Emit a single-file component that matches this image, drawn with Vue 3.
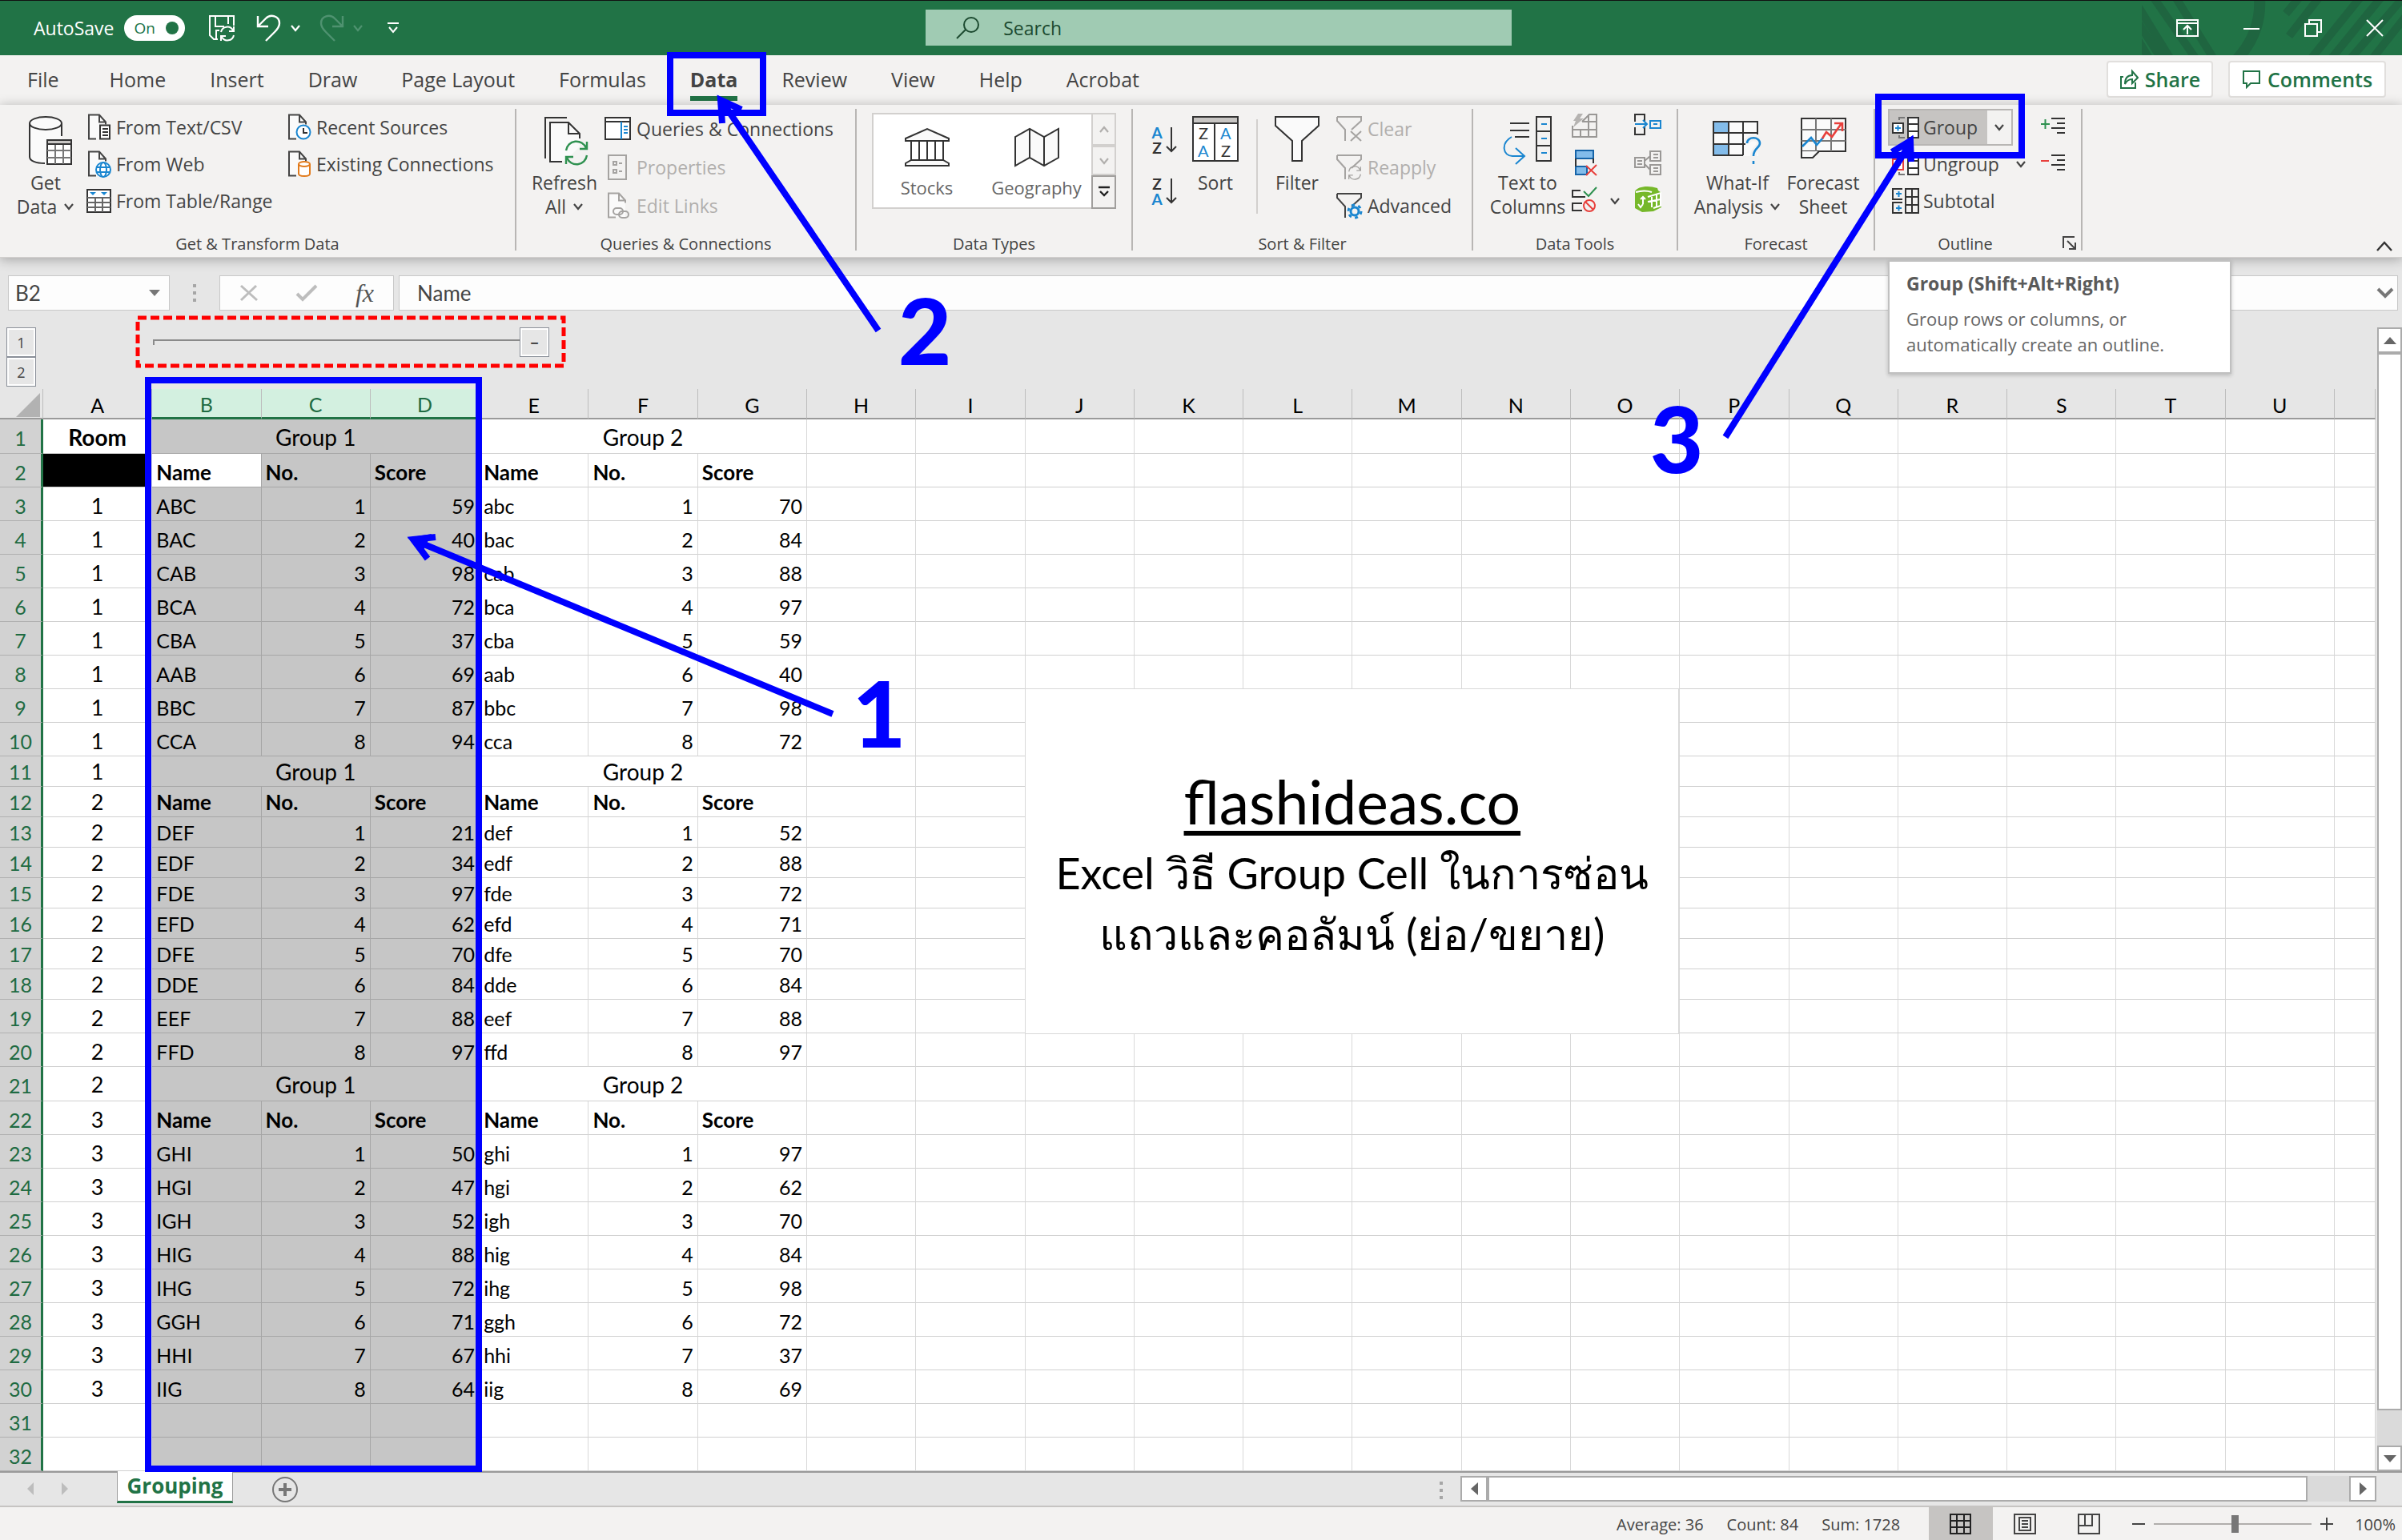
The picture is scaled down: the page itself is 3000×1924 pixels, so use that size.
<script setup>
import { ref } from 'vue'

const autoSave = ref(true)
const zoomLevel = ref(100)
const formula = ref('Name')

const tabs = ['File', 'Home', 'Insert', 'Draw', 'Page Layout', 'Formulas', 'Data', 'Review', 'View', 'Help', 'Acrobat']
const letters = 'ABCDEFGHIJKLMNOPQRSTU'.split('')
const selected = ['B', 'C', 'D']

const blocks = [
  {
    names: ['ABC', 'BAC', 'CAB', 'BCA', 'CBA', 'AAB', 'BBC', 'CCA'],
    left: [59, 40, 98, 72, 37, 69, 87, 94],
    right: [70, 84, 88, 97, 59, 40, 98, 72],
  },
  {
    names: ['DEF', 'EDF', 'FDE', 'EFD', 'DFE', 'DDE', 'EEF', 'FFD'],
    left: [21, 34, 97, 62, 70, 84, 88, 97],
    right: [52, 88, 72, 71, 70, 84, 88, 97],
  },
  {
    names: ['GHI', 'HGI', 'IGH', 'HIG', 'IHG', 'GGH', 'HHI', 'IIG'],
    left: [50, 47, 52, 88, 72, 71, 67, 64],
    right: [97, 62, 70, 84, 98, 72, 37, 69],
  },
]

const rows = []
blocks.forEach((block, b) => {
  rows.push({ kind: 'title', room: b === 0 ? 'Room' : b })
  rows.push({ kind: 'head', room: b === 0 ? '' : b + 1 })
  block.names.forEach((name, i) => {
    rows.push({
      kind: 'data',
      room: b + 1,
      cells: [name, i + 1, block.left[i], name.toLowerCase(), i + 1, block.right[i]],
    })
  })
})
rows.push({ kind: 'empty' }, { kind: 'empty' })
const headings = ['Name', 'No.', 'Score', 'Name', 'No.', 'Score']
const isShort = (n) => n >= 11 && n <= 18
</script>

<template>
  <div class="app">
    <svg class="defs" aria-hidden="true">
      <symbol id="chev" viewBox="0 0 14 10"><path d="M2 2l5 6 5-6" fill="none" stroke="currentColor" stroke-width="2.2" /></symbol>
      <symbol id="doc" viewBox="0 0 32 34"><path d="M3 1.500h13l8 9v21H3z" fill="#fafafa" /><path d="M12 31.500H3v-30h13l8 9v3M16 1.500v9h8" fill="none" stroke="currentColor" stroke-width="2" /></symbol>
      <symbol id="funnel" viewBox="0 0 34 34"><path d="M2 2h30v5L20 18M12 32V18L2 7V2" fill="none" stroke="currentColor" stroke-width="2" /></symbol>
      <symbol id="spin" viewBox="0 0 32 32"><path d="M3 13A13 13 0 0 1 28 10M29 2v9h-9M29 19A13 13 0 0 1 4 22M3 30v-9h9" fill="none" stroke="currentColor" stroke-width="2.400" /></symbol>
    </svg>

    <header class="titlebar">
      <svg class="pattern" viewBox="0 0 325 68" fill="none" stroke="#1f6540" stroke-width="10" aria-hidden="true">
        <path d="M-4 8L38 76M-4 28L28 78M-4 50L14 80M12-8L70 76M40-8L92 76" />
        <path d="M147-4Q150 40 118 74" stroke-width="14" />
        <path d="M180 16L200-8M184 44L226-10M210 74L276-8M232 78L302-8M254 80L330-8M282 80L334 14" />
      </svg>
      <label class="autosave">
        <span>AutoSave</span>
        <input v-model="autoSave" type="checkbox" role="switch" />
        <span class="pill">On<i></i></span>
      </label>
      <button class="qat save" aria-label="Save">
        <svg width="34" height="34" viewBox="0 0 34 34" fill="none" stroke="#fff" stroke-width="2"><path d="M12 31H7l-5-5V2h30v12M9 2v13h11M25 2v10M10 31V20h4" /><path d="M16 22a8 8 0 0 1 15-2M32 15v6h-6M32 26a8 8 0 0 1-15 2M16 33v-6h6" /></svg>
      </button>
      <button class="qat undo" aria-label="Undo">
        <svg width="32" height="34" viewBox="0 0 32 34" fill="none" stroke="#fff" stroke-width="2.400"><path d="M2 2v13h13M2 15L12 5C18-1 29 2 29 11c0 5-3 8-6 11L12 33" /></svg>
      </button>
      <svg class="chev" width="14" height="10"><use href="#chev" /></svg>
      <button class="qat redo" aria-label="Redo" disabled>
        <svg width="32" height="34" viewBox="0 0 32 34" fill="none" stroke="#4f9270" stroke-width="2.400"><path d="M30 2v13H17M30 15L20 5C14-1 3 2 3 11c0 5 3 8 6 11l11 11" /></svg>
      </button>
      <svg class="chev dim" width="14" height="10"><use href="#chev" /></svg>
      <svg class="more" width="16" height="14" viewBox="0 0 16 14" fill="none" stroke="#fff" stroke-width="2"><path d="M1 1h14M3 6l5 6 5-6" /></svg>
      <label class="search">
        <svg width="32" height="30" viewBox="0 0 32 30" fill="none" stroke="#1c4a30" stroke-width="2"><circle cx="20" cy="11" r="9" /><path d="M13 17L2 28" /></svg>
        <input type="text" placeholder="Search" aria-label="Search" />
      </label>
      <div class="winctl">
        <button aria-label="Ribbon display options"><svg width="28" height="22" viewBox="0 0 28 22" fill="none" stroke="#fff" stroke-width="2"><path d="M1 1h26v20H1zM1 5h26M14 19V9M9 13l5-5 5 5" /></svg></button>
        <button aria-label="Minimize"><svg width="22" height="22" viewBox="0 0 22 22" stroke="#fff" stroke-width="2"><path d="M1 12h20" /></svg></button>
        <button aria-label="Restore"><svg width="22" height="22" viewBox="0 0 22 22" fill="none" stroke="#fff" stroke-width="2"><path d="M1 6h15v15H1zM6 6V1h15v15h-5" /></svg></button>
        <button aria-label="Close"><svg width="22" height="22" viewBox="0 0 22 22" stroke="#fff" stroke-width="2"><path d="M1 1l20 20M21 1L1 21" /></svg></button>
      </div>
    </header>

    <nav class="tabs">
      <button v-for="t in tabs" :key="t" :class="{ active: t === 'Data' }">{{ t }}</button>
      <div class="side">
        <button class="share">
          <svg width="24" height="26" viewBox="0 0 24 26" fill="none" stroke="currentColor" stroke-width="2"><path d="M5 10H2v14h18v-7M7 19c0-8 4-11 9-11V3l7 8-7 7v-5c-4 0-7 2-9 6z" /></svg>Share
        </button>
        <button class="comments">
          <svg width="24" height="24" viewBox="0 0 24 24" fill="none" stroke="currentColor" stroke-width="2"><path d="M2 2h20v15H11l-5 5v-5H2z" /></svg>Comments
        </button>
      </div>
    </nav>

    <section class="ribbon">
      <div class="group g1">
        <div class="body">
          <button class="big">
            <svg width="60" height="62" viewBox="0 0 60 62" fill="none" stroke="#333" stroke-width="2"><path d="M4 9v43c0 4 8 8 20 8h2V30h19V9" fill="#fafafa" stroke="none" /><ellipse cx="25" cy="9" rx="20" ry="8" fill="#fafafa" /><path d="M5 9v42c0 5 8 8 19 8M45 9v16" /><path d="M27 30h30v30H27z" fill="#fff" /><path d="M27 30h30v5H27z" fill="#c8c6c4" /><path d="M27 43h30M27 52h30M37 36v24M47 36v24" stroke="#777" /></svg>
            <span>Get</span><span>Data <svg class="c" width="14" height="10"><use href="#chev" /></svg></span>
          </button>
          <div class="small first">
            <button><span class="ic"><svg width="32" height="34" viewBox="0 0 32 34"><use href="#doc" /><path d="M17 14.500h12v17H17zM20 19h7M20 23h7M20 27h7" fill="#fff" stroke="#333" stroke-width="2" /></svg></span>From Text/CSV</button>
            <button><span class="ic"><svg width="32" height="34" viewBox="0 0 32 34"><use href="#doc" /><g fill="#fff" stroke="#1a86d0" stroke-width="2"><circle cx="21" cy="24" r="9" /><ellipse cx="21" cy="24" rx="4" ry="9" /><path d="M13 21h16M13 27h16" /></g></svg></span>From Web</button>
            <button><span class="ic"><svg width="32" height="34" viewBox="0 0 32 34" fill="none" stroke="#333" stroke-width="2"><path d="M1 3h29v28H1z" fill="#fff" /><path d="M1 13h29M11 13v18M20 13v18M1 19h29M1 25h29" stroke="#666" /><path d="M4 6h8l-4 4zM18 6h8l-4 4z" fill="#1a86d0" stroke="none" /></svg></span>From Table/Range</button>
          </div>
          <div class="small">
            <button><span class="ic"><svg width="32" height="34" viewBox="0 0 32 34"><use href="#doc" /><circle cx="21" cy="23" r="8.500" fill="#fff" stroke="#1a86d0" stroke-width="2" /><path d="M21 18v6h5" fill="none" stroke="#333" stroke-width="2" /></svg></span>Recent Sources</button>
            <button><span class="ic"><svg width="32" height="34" viewBox="0 0 32 34"><use href="#doc" /><path d="M15 17v12c0 4 14 4 14 0V17" fill="#fff" stroke="#e27b1c" stroke-width="2" /><ellipse cx="22" cy="17" rx="7" ry="3" fill="#fff" stroke="#e27b1c" stroke-width="2" /></svg></span>Existing Connections</button>
          </div>
        </div>
        <div class="caption">Get &amp; Transform Data</div>
      </div>

      <div class="group g2">
        <div class="body">
          <button class="big">
            <svg width="60" height="62" viewBox="0 0 60 62" fill="none" stroke="#333" stroke-width="2"><path d="M3 53V2h27" /><path d="M9 8h24l13 14v16L28 56H9z" fill="#fafafa" stroke="none" /><path d="M24 57H9V8h23l14 14v6M32 8v14h14" /><svg x="26" y="30" width="32" height="32" color="#2f9150"><use href="#spin" /></svg></svg>
            <span>Refresh</span><span>All <svg class="c" width="14" height="10"><use href="#chev" /></svg></span>
          </button>
          <div class="small tall">
            <button><span class="ic"><svg width="34" height="30" viewBox="0 0 34 30" fill="none" stroke="#333" stroke-width="2"><path d="M1 1h31v27H1z" fill="#fff" /><path d="M1 6h31" /><path d="M21 6v22M24 12h5M24 16h5M24 20h5" stroke="#1a86d0" /></svg></span>Queries &amp; Connections</button>
            <button disabled><span class="ic"><svg width="34" height="34" viewBox="0 0 34 34" fill="none" stroke="#a5a3a1" stroke-width="2"><path d="M5 2h22v30H5zM11 10h4v4h-4zM11 20h4v4h-4zM18 12h4M18 22h4" /></svg></span>Properties</button>
            <button disabled><span class="ic"><svg width="34" height="34" viewBox="0 0 34 34"><svg x="2" width="32" height="34" color="#a5a3a1"><use href="#doc" /></svg><g fill="none" stroke="#a5a3a1" stroke-width="2"><rect x="11" y="20" width="12" height="8" rx="4" /><rect x="18" y="24" width="12" height="8" rx="4" /></g></svg></span>Edit Links</button>
          </div>
        </div>
        <div class="caption">Queries &amp; Connections</div>
      </div>

      <div class="group g3">
        <div class="body">
          <div class="gallery">
            <button class="item">
              <svg width="58" height="50" viewBox="0 0 58 50" fill="#fafafa" stroke="#333" stroke-width="2"><path d="M2 14L29 2l27 12v3H2zM9 17v24M19 17v24M29 17v24M39 17v24M49 17v24M2 48v-3l7-4h40l7 4v3z" /></svg>
              Stocks
            </button>
            <button class="item">
              <svg width="58" height="50" viewBox="0 0 58 50" fill="#fafafa" stroke="#333" stroke-width="2"><path d="M2 12L20 2l18 10L56 2v36L38 48 20 38 2 48zM20 2v36M38 12v36" /></svg>
              Geography
            </button>
            <div class="steps">
              <button aria-label="Previous types"><svg class="flip" width="14" height="10"><use href="#chev" /></svg></button>
              <button aria-label="Next types"><svg width="14" height="10"><use href="#chev" /></svg></button>
              <button class="open" aria-label="All types"><svg width="16" height="16" viewBox="0 0 16 16" fill="none" stroke="#222" stroke-width="2.400"><path d="M1 2h14M3 7l5 5 5-5" /></svg></button>
            </div>
          </div>
        </div>
        <div class="caption">Data Types</div>
      </div>

      <div class="group g4">
        <div class="body">
          <div class="orders">
            <button aria-label="Sort A to Z"><span class="az"><b class="blue">A</b><b>Z</b></span><svg width="14" height="34" viewBox="0 0 14 34"><path d="M7 1v30M1 25l6 6 6-6" fill="none" stroke="#333" stroke-width="2" /></svg></button>
            <button aria-label="Sort Z to A"><span class="az"><b>Z</b><b class="blue">A</b></span><svg width="14" height="34" viewBox="0 0 14 34"><path d="M7 1v30M1 25l6 6 6-6" fill="none" stroke="#333" stroke-width="2" /></svg></button>
          </div>
          <button class="big sort">
            <svg width="58" height="62" viewBox="0 0 58 62"><path d="M1 1h56v55H1z" fill="#fff" stroke="#333" stroke-width="2" /><path d="M1 1h56v8H1zM28 9v47" fill="#c8c6c4" stroke="#333" stroke-width="2" /><text x="8" y="29">Z</text><text x="7" y="51" fill="#1a86d0">A</text><text x="35" y="29" fill="#1a86d0">A</text><text x="36" y="51">Z</text></svg>
            <span>Sort</span>
          </button>
          <div class="rule"></div>
          <button class="big filter">
            <svg width="58" height="62" viewBox="0 0 58 62" fill="#fafafa" stroke="#333" stroke-width="2"><path d="M2 1h54v11L35 31v25H23V31L2 12z" /></svg>
            <span>Filter</span>
          </button>
          <div class="small tall">
            <button disabled><span class="ic"><svg width="34" height="34" viewBox="0 0 34 34" color="#a5a3a1"><use href="#funnel" /><path d="M19 20l13 12M32 20L19 32" stroke="#a5a3a1" stroke-width="2" /></svg></span>Clear</button>
            <button disabled><span class="ic"><svg width="34" height="34" viewBox="0 0 34 34" color="#a5a3a1"><use href="#funnel" /><svg x="15" y="15" width="18" height="18"><use href="#spin" /></svg></svg></span>Reapply</button>
            <button><span class="ic"><svg width="34" height="34" viewBox="0 0 34 34"><use href="#funnel" /><g fill="none" stroke="#1a86d0"><circle cx="24" cy="24" r="5" stroke-width="3" /><circle cx="24" cy="24" r="8" stroke-width="3" stroke-dasharray="4 4.380" /></g></svg></span>Advanced</button>
          </div>
        </div>
        <div class="caption">Sort &amp; Filter</div>
      </div>

      <div class="group g5">
        <div class="body">
          <button class="big">
            <svg width="62" height="62" viewBox="0 0 62 62" fill="none" stroke="#333" stroke-width="2"><path d="M9 9h24M9 18h24M15 26h18M42 1h18v55H42zM42 19h18M42 37h18" /><path d="M48 10h7M48 28h7M48 46h7M11 26C-3 34 0 50 12 50h14M16 40l11 10-11 10" stroke="#1a86d0" /></svg>
            <span>Text to</span><span>Columns</span>
          </button>
          <div class="tools">
            <button aria-label="Flash Fill" disabled><svg width="34" height="34" viewBox="0 0 34 34" fill="none" stroke="#9a9896" stroke-width="2"><path d="M14 12l9-9h9v28H2V17M2 22h30M12 22v9M22 3v28M14 12h18" /><path d="M9 2h6l-4 6h5L3 19l3-8H3z" fill="#b5b3b1" stroke="none" /></svg></button>
            <button aria-label="Remove Duplicates"><svg width="34" height="34" viewBox="0 0 34 34" fill="#83bcea" stroke="#1664a8" stroke-width="2"><path d="M6 2h22v10H6zM6 22h14v10H6z" /><path d="M6 12v10M28 12v6" stroke="#333" /><path d="M19 21l13 12M32 20L19 33" stroke="#e8403c" /></svg></button>
            <button aria-label="Data Validation"><svg width="34" height="34" viewBox="0 0 34 34" fill="none" stroke="#333" stroke-width="2"><path d="M12 6H2v8h16M14 22H2v9h12" /><path d="M16 7l6 6L32 2" stroke="#2f9150" /><circle cx="23" cy="25" r="7" stroke="#e8403c" /><path d="M18 20l10 10" stroke="#e8403c" /></svg></button>
          </div>
          <svg class="c toolchev" width="14" height="10"><use href="#chev" /></svg>
          <div class="tools">
            <button aria-label="Consolidate"><svg width="36" height="34" viewBox="0 0 36 34" fill="none" stroke="#333" stroke-width="2"><path d="M14 12V3H2v9M2 19v9h12v-9" /><path d="M2 15h14M12 10l5 5-5 5M21 11h13v9H21zM25 15h5" stroke="#1a86d0" /></svg></button>
            <button aria-label="Relationships" disabled><svg width="36" height="34" viewBox="0 0 36 34" fill="none" stroke="#9a9896" stroke-width="2"><path d="M2 11h12v12H2zM21 3h13v12H21zM21 20h13v12H21zM14 15l7-6M14 19l7 7M5 15h6M5 19h6M25 7h6M25 11h6M25 24h6M25 28h6" /></svg></button>
            <button aria-label="Data Model"><svg width="36" height="34" viewBox="0 0 36 34"><path d="M2 7c3-6 16-8 28-4l1 3 4 3v18l-10 5-14 1-9-5z" fill="#76b82a" /><path d="M3 8c7-2 14-2 20 0M23 14v13M29 11v15M18 14l16-5v16l-9 3M18 20l16-3M9 17l3-3 3 3M12 14v9M6 23l3 4 3-4" fill="none" stroke="#fff" stroke-width="2" /></svg></button>
          </div>
        </div>
        <div class="caption">Data Tools</div>
      </div>

      <div class="group g6">
        <div class="body">
          <button class="big whatif">
            <svg width="66" height="62" viewBox="0 0 66 62" fill="none" stroke="#333" stroke-width="2"><path d="M3 7h56v43H3z" fill="#fafafa" stroke="none" /><path d="M3 7h19v14H3zM3 35h19v14H3z" fill="#83bcea" stroke="none" /><path d="M40 49H3V7h55v16M3 21h55M3 35h40M22 7v42M40 7v42" /><path d="M45 34c0-9 16-9 16 0 0 6-8 6-8 16M53 55v6" stroke="#f3f2f1" stroke-width="8" /><path d="M45 34c0-9 16-9 16 0 0 6-8 6-8 16M53 56v4" stroke="#1a86d0" stroke-width="2.600" /></svg>
            <span>What-If</span><span>Analysis <svg class="c" width="14" height="10"><use href="#chev" /></svg></span>
          </button>
          <button class="big forecast">
            <svg width="60" height="62" viewBox="0 0 60 62" fill="none" stroke="#333" stroke-width="2"><path d="M3 3h55v41H3z" fill="#fafafa" /><path d="M3 17h55M3 31h55M21 3v41M40 3v41" stroke="#777" /><path d="M3 44v8h14l8-8" fill="#fafafa" /><path d="M4 38l11-11 7 9 8-9" stroke="#1a86d0" stroke-width="2.600" /><path d="M29 28l5-8 7 6L53 9M44 9h10v10" stroke="#e8403c" stroke-width="2.600" /></svg>
            <span>Forecast</span><span>Sheet</span>
          </button>
        </div>
        <div class="caption">Forecast</div>
      </div>

      <div class="group g7">
        <div class="body">
          <div class="small">
            <div class="split">
              <button><span class="ic"><svg width="36" height="30" viewBox="0 0 36 30" fill="#fff" stroke="#333" stroke-width="2"><path d="M2 10h13v12H2zM21 3h13v25H21zM21 11h13M21 20h13" /><path d="M10 6V3h7M10 25v3h7" fill="none" stroke="#777" /><path d="M5 16h7M8.500 12.500v7" stroke="#1a86d0" /></svg></span>Group</button>
              <button class="drop" aria-label="Group options"><svg class="c" width="14" height="10"><use href="#chev" /></svg></button>
            </div>
            <button><span class="ic"><svg width="36" height="30" viewBox="0 0 36 30" fill="#fff" stroke="#333" stroke-width="2"><path d="M21 3h13v25H21zM21 11h13M21 20h13" /><path d="M2 9h13v13H2zM5 16h7" stroke="#e8403c" /><path d="M10 5V3h7M10 25v3h7" fill="none" stroke="#777" /></svg></span>Ungroup<svg class="c far" width="14" height="10"><use href="#chev" /></svg></button>
            <button><span class="ic"><svg width="36" height="34" viewBox="0 0 36 34" fill="none" stroke="#333" stroke-width="2"><path d="M18 2h16v30H18zM26 2v30M18 12h16M18 22h16M14 2H2v13h12M14 19H2v13h12" /><path d="M6 8h7M9.500 5v7M6 26h7M9.500 22.500v7" stroke="#1a86d0" /></svg></span>Subtotal</button>
          </div>
          <div class="tools details">
            <button aria-label="Show Detail"><svg width="32" height="24" viewBox="0 0 32 24" stroke="#333" stroke-width="2"><path d="M14 3h17M21 9h10M14 15h17M21 21h10" /><path d="M1 10h11M6.500 4v12" stroke="#2f9150" /></svg></button>
            <button aria-label="Hide Detail"><svg width="32" height="24" viewBox="0 0 32 24" stroke="#333" stroke-width="2"><path d="M14 3h17M21 9h10M14 15h17M21 21h10" /><path d="M1 10h10" stroke="#e8403c" /></svg></button>
          </div>
        </div>
        <div class="caption">Outline</div>
        <svg class="launcher" width="18" height="18" viewBox="0 0 18 18" fill="none" stroke="#444" stroke-width="2"><path d="M1 15V1h14M6 6l9 9M16 8v8H8" /></svg>
      </div>
      <button class="collapse" aria-label="Collapse ribbon"><svg width="22" height="14" viewBox="0 0 22 14" fill="none" stroke="#333" stroke-width="2.400"><path d="M2 12L11 2l9 10" /></svg></button>
    </section>

    <section class="formulabar">
      <label class="namebox"><input type="text" value="B2" aria-label="Name box" /><svg width="14" height="8" viewBox="0 0 14 8"><path d="M0 0h14L7 8z" fill="#777" /></svg></label>
      <i class="dots"></i>
      <div class="fx">
        <svg width="24" height="22" viewBox="0 0 24 22" fill="none" stroke="#bdbdbd" stroke-width="3"><path d="M2 2l20 18M21 2L2 20" /></svg>
        <svg width="28" height="22" viewBox="0 0 28 22" fill="none" stroke="#bdbdbd" stroke-width="4"><path d="M2 12l7 7L26 2" /></svg>
        <em>fx</em>
      </div>
      <label class="formula"><input v-model="formula" type="text" aria-label="Formula" /><svg width="22" height="14" viewBox="0 0 22 14" fill="none" stroke="#777" stroke-width="4"><path d="M2 2l9 9 9-9" /></svg></label>
    </section>

    <main class="workspace">
      <div class="sheet">
        <div class="outline">
          <div class="levels"><button>1</button><button>2</button></div>
          <div class="bracket"><i></i><button aria-label="Collapse group">−</button></div>
        </div>
        <table>
          <colgroup><col class="rh" /><col v-for="l in letters" :key="l" /><col class="rest" /></colgroup>
          <thead>
            <tr>
              <th class="corner"><svg width="30" height="30" viewBox="0 0 30 30"><path d="M30 0v30H0z" fill="#b2b2b2" /></svg></th>
              <th v-for="l in letters" :key="l" scope="col" :class="{ sel: selected.includes(l) }">{{ l }}</th>
              <th></th>
            </tr>
          </thead>
          <tbody>
            <tr v-for="(r, i) in rows" :key="i" :class="[r.kind, { short: isShort(i + 1) }]">
              <th scope="row">{{ i + 1 }}</th>
              <td class="room" :class="{ black: i === 1, bold: i === 0 }">{{ r.room }}</td>
              <template v-if="r.kind === 'title'">
                <td colspan="3" class="sel merged">Group 1</td>
                <td colspan="3" class="merged">Group 2</td>
              </template>
              <template v-else-if="r.kind === 'head'">
                <td v-for="(h, c) in headings" :key="c" class="bold" :class="{ sel: c < 3, cursor: i === 1 && c === 0 }">{{ h }}</td>
              </template>
              <template v-else-if="r.kind === 'data'">
                <td v-for="(v, c) in r.cells" :key="c" :class="{ sel: c < 3, num: c % 3 }">{{ v }}</td>
              </template>
              <template v-else>
                <td v-for="c in 6" :key="c" :class="{ sel: c < 4 }"></td>
              </template>
              <td v-for="c in 15" :key="'e' + c"></td>
            </tr>
          </tbody>
        </table>
        <div class="textbox">
          <a href="#">flashideas.co</a>
          <p>Excel วิธี Group Cell ในการซ่อน<br />แถวและคอลัมน์ (ย่อ/ขยาย)</p>
        </div>
      </div>
      <div class="vscroll">
        <button aria-label="Scroll up"><svg width="16" height="9" viewBox="0 0 16 9"><path d="M0 9l8-9 8 9z" fill="#666" /></svg></button>
        <i class="thumb"></i><i class="track"></i>
        <button aria-label="Scroll down"><svg width="16" height="9" viewBox="0 0 16 9"><path d="M0 0l8 9 8-9z" fill="#666" /></svg></button>
      </div>
    </main>

    <section class="sheetbar">
      <svg class="nav" width="52" height="16" viewBox="0 0 52 16" fill="#bdbdbd"><path d="M8 0v16L0 8zM43 0v16l8-8z" /></svg>
      <button class="sheettab">Grouping</button>
      <button class="add" aria-label="New sheet"><svg width="34" height="34" viewBox="0 0 34 34" fill="none" stroke="#777"><circle cx="17" cy="17" r="15" stroke-width="2" /><path d="M9 17h16M17 9v16" stroke-width="4" /></svg></button>
      <i class="dots"></i>
      <div class="hscroll">
        <button aria-label="Scroll left"><svg width="9" height="16" viewBox="0 0 9 16"><path d="M9 0v16L0 8z" fill="#666" /></svg></button>
        <i class="thumb"></i><i class="track"></i>
        <button aria-label="Scroll right"><svg width="9" height="16" viewBox="0 0 9 16"><path d="M0 0v16l9-8z" fill="#666" /></svg></button>
      </div>
    </section>

    <footer class="status">
      <span>Average: 36</span><span>Count: 84</span><span>Sum: 1728</span>
      <div class="views">
        <button class="on" aria-label="Normal"><svg width="28" height="28" viewBox="0 0 28 28" fill="none" stroke="#222" stroke-width="2"><path d="M1 2h25v24H1zM1 10h25M1 18h25M9 2v24M18 2v24" /></svg></button>
        <button aria-label="Page Layout"><svg width="28" height="28" viewBox="0 0 28 28" fill="none" stroke="#444" stroke-width="2"><path d="M1 2h26v24H1zM7 6h14v16H7zM10 10h8M10 14h8M10 18h8" /></svg></button>
        <button aria-label="Page Break Preview"><svg width="28" height="28" viewBox="0 0 28 28" fill="none" stroke="#444" stroke-width="2"><path d="M1 2h26v24H1zM9 2v14M18 2v14H1" /></svg></button>
      </div>
      <svg width="18" height="18" viewBox="0 0 18 18" stroke="#444" stroke-width="2"><path d="M1 9h16" /></svg>
      <input v-model="zoomLevel" type="range" min="0" max="194" aria-label="Zoom" />
      <svg width="18" height="18" viewBox="0 0 18 18" stroke="#444" stroke-width="2"><path d="M1 9h16M9 1v16" /></svg>
      <span class="pct">{{ zoomLevel }}%</span>
    </footer>

    <aside class="tooltip" role="tooltip">
      <strong>Group (Shift+Alt+Right)</strong>
      <p>Group rows or columns, or<br />automatically create an outline.</p>
    </aside>

    <svg class="notes" viewBox="0 0 3000 1924" preserveAspectRatio="xMinYMin meet" fill="none" stroke="#00f" stroke-width="8">
      <rect x="172" y="397" width="532" height="60" stroke="#f00" stroke-width="5" stroke-dasharray="11 5" />
      <rect x="185" y="475" width="413" height="1360" />
      <rect x="837" y="69" width="116" height="72" />
      <rect x="2346" y="121" width="179" height="73" />
      <path d="M520 676L1040 892M544 671L516 674 534 698" />
      <path d="M904 130L1097 413M926 137L900 125 902 154" />
      <path d="M2384 182L2155 546M2363 190L2386 176 2387 202" />
      <g fill="#00f" stroke="none">
        <path d="M509 672l30-5-10 20zM896 119l22 12-14 10zM2389 169l-18 14 16 10z" />
        <text x="1098" y="934">1</text><text x="1155" y="456">2</text><text x="2094" y="591">3</text>
      </g>
    </svg>
  </div>
</template>

<style>
body { margin: 0; background: #e6e6e6; }
</style>

<style scoped>
.app { position: relative; display: flex; flex-direction: column; min-height: 100vh; overflow: hidden; background: #e6e6e6; color: #444; font-family: "Open Sans", "Noto Sans", sans-serif; font-size: 23px; }
.app * { box-sizing: border-box; }
button { border: 0; padding: 0; margin: 0; background: none; color: inherit; font: inherit; }
input { border: 0; padding: 0; margin: 0; background: none; font: inherit; color: inherit; outline: 0; min-width: 0; }
svg { flex: none; display: block; }
.defs { position: absolute; width: 0; height: 0; }

.titlebar { position: relative; display: flex; align-items: center; height: 69px; border-top: 1px solid #111; background: #217346; color: #fff; padding-left: 42px; }
.pattern { position: absolute; right: 0; top: 0; width: 325px; height: 68px; }
.autosave { display: flex; align-items: center; gap: 13px; font-size: 23px; }
.autosave input { position: absolute; opacity: 0; }
.pill { display: flex; align-items: center; justify-content: space-between; width: 76px; height: 32px; padding: 0 8px 0 12px; border-radius: 16px; background: #fff; color: #217346; font-size: 19px; }
.pill i { width: 16px; height: 16px; border-radius: 50%; background: #217346; }
.save { margin-left: 29px; }
.undo { margin-left: 26px; }
.redo { margin-left: 22px; }
.chev { margin-left: 10px; }
.dim { color: #4f9270; }
.more { margin-left: 29px; }
.search { position: absolute; left: 38.540%; top: 11px; width: 24.400%; height: 45px; display: flex; align-items: center; gap: 28px; padding-left: 37px; background: #a0cbb3; color: #1c4a30; }
.search input { flex: 1; font-size: 23px; }
.search input::placeholder { color: #1c4a30; opacity: 1; }
.winctl { position: relative; margin-left: auto; margin-right: 23px; display: flex; align-items: center; gap: 55px; }

.tabs { display: flex; align-items: flex-start; gap: 55px; height: 62px; padding-left: 34px; background: #f3f2f1; font-size: 25px; }
.tabs > button { height: 57px; line-height: 56px; padding-top: 2px; white-space: nowrap; }
.tabs > button:first-child { margin-right: 8px; }
.tabs > .active { font-weight: 700; border-bottom: 6px solid #217346; }
.side { display: flex; gap: 19px; margin: 7px 20px 0 auto; }
.side button { display: flex; align-items: center; justify-content: center; gap: 8px; height: 46px; border: 2px solid #e1dfdd; border-radius: 4px; background: #fff; color: #217346; font-weight: 600; font-size: 25px; }
.share { width: 133px; }
.comments { width: 197px; }

.ribbon { position: relative; display: flex; height: 191px; padding-top: 5px; background: #f3f2f1; border-bottom: 1px solid #d2d0ce; box-shadow: 0 2px 14px #0000004d; z-index: 1; }
.group { position: relative; flex: none; display: flex; flex-direction: column; justify-content: space-between; height: 177px; border-right: 2px solid #b8b6b4; }
.body { display: flex; align-items: flex-start; }
.caption { text-align: center; font-size: 20px; line-height: 16px; }
.g1 { width: 645px; } .g1 .body { padding-left: 16px; }
.g2 { width: 425px; } .g2 .body { padding-left: 12px; }
.g3 { width: 345px; } .g3 .body { padding-left: 19px; }
.g4 { width: 425px; } .g4 .body { padding-left: 20px; }
.g5 { width: 256px; } .g5 .body { padding-left: 14px; }
.g6 { width: 246px; } .g6 .body { padding-left: 14px; }
.g7 { width: 259px; } .g7 .body { padding-left: 16px; }
.g7 .caption { padding-right: 32px; }
.big { display: flex; flex-direction: column; align-items: center; width: 82px; padding-top: 9px; line-height: 30px; white-space: nowrap; }
.big > svg { margin-bottom: 6px; }
.g1 .big > svg { margin-left: 10px; }
.big span { display: flex; align-items: center; gap: 8px; }
.g2 .big { width: 96px; }
.g2 .big > svg { margin-left: 6px; }
.g2 .small { margin-left: 2px; }
.g5 .big { width: 108px; }
.sort { width: 66px; }
.filter { width: 72px; }
.whatif { width: 120px; }
.forecast { width: 94px; }
.c { color: #444; }
.small { display: flex; flex-direction: column; }
.small button { display: flex; align-items: center; height: 46px; white-space: nowrap; }
.small .ic { width: 37px; }
.first { width: 250px; margin-left: 10px; }
.tall { padding-top: 1px; }
.tall button { height: 48px; }
.tall .ic { width: 40px; }
button:disabled { color: #b1afad; }
.gallery { display: flex; width: 305px; height: 120px; margin-top: 5px; background: #fff; border: 2px solid #d2d0ce; }
.item { flex: 1; display: flex; flex-direction: column; align-items: center; justify-content: center; gap: 10px; padding: 6px 4px 0 0; font-size: 22px; line-height: 30px; color: #666; }
.steps { display: grid; grid-template-rows: 41px 37px 42px; width: 31px; margin: -2px; }
.steps button { display: grid; place-items: center; border: 2px solid #d2d0ce; background: #f3f2f1; color: #b1afad; }
.steps .open { border-color: #a19f9d; }
.flip { transform: rotate(180deg); }
.orders { display: flex; flex-direction: column; gap: 26px; padding-top: 20px; width: 50px; }
.orders button { display: flex; align-items: center; gap: 4px; height: 38px; padding-left: 3px; }
.az { display: flex; flex-direction: column; align-items: center; width: 14px; }
.az b { font-family: Lato, sans-serif; font-size: 19px; line-height: 19px; color: #333; }
.az .blue { color: #1a86d0; }
text { font-family: Lato, sans-serif; font-size: 20px; fill: #333; }
text[fill] { fill: #1a86d0; }
.rule { width: 2px; height: 118px; margin: 13px 13px 0 18px; background: #d2d0ce; }
.g4 .tall { margin-left: 12px; }
.tools { display: flex; flex-direction: column; padding-top: 4px; gap: 12px; }
.toolchev { margin: 110px 16px 0 14px; }
.split { display: flex; width: 156px; border: 2px solid #b8b6b4; background: #c6c4c2; }
.split button { height: 42px; }
.g7 .ic { width: 44px; padding-left: 4px; }
.split .ic { padding-left: 2px; width: 42px; }
.split .drop { width: 30px; margin-left: auto; justify-content: center; background: #f3f2f1; }
.far { margin-left: 20px; }
.g7 .small { width: 174px; }
.details { padding: 9px 0 0 16px; gap: 22px; }
.launcher { position: absolute; right: 5px; bottom: 0; }
.collapse { position: absolute; right: 11px; bottom: 6px; }

.formulabar { display: flex; align-items: center; height: 66px; padding: 22px 5px 0 10px; font-family: Lato, sans-serif; font-size: 26px; }
.namebox, .fx, .formula { display: flex; align-items: center; height: 44px; border: 1px solid #c8c8c8; background: #fdfdfd; }
.namebox { width: 202px; padding: 0 11px 0 8px; }
.namebox input { flex: 1; }
.dots { width: 4px; height: 22px; background: repeating-linear-gradient(#a6a6a6 0 4px, transparent 4px 9px); margin: 0 29px; }
.fx { width: 218px; padding: 0 24px; justify-content: space-between; margin-right: 6px; }
.fx em { font: italic 32px "Liberation Serif", serif; color: #555; }
.formula { flex: 1; padding: 0 4px 0 22px; }
.formula input { flex: 1; }

.workspace { display: flex; }
.sheet { position: relative; flex: 1; min-width: 0; font-family: Lato, sans-serif; color: #000; }
.outline { display: flex; height: 98px; padding: 21px 0 0 8px; }
.levels button, .bracket button { display: block; width: 37px; height: 37px; border: 1px solid #8a8f98; background: #e6e6e6; font: 18px "Open Sans", sans-serif; color: #444; box-shadow: inset 0 0 0 2px #fff; }
.bracket { display: flex; align-items: flex-start; width: 495px; margin-left: 146px; }
.bracket button { font-weight: 700; color: #333; }
.bracket i { flex: 1; height: 7px; margin-top: 15px; border: solid #8a8a8a; border-width: 2px 0 0 2px; }
table { width: 100%; table-layout: fixed; border-collapse: separate; border-spacing: 0; font-size: 25px; line-height: 30px; }
.rh { width: 54px; }
.rest { width: 51px; }
th { font-weight: 400; padding: 2px 0 0; }
thead th { height: 38px; padding: 3px 0 0; border-right: 1px solid #bdbdbd; border-bottom: 2px solid #9a9a9a; }
thead th.sel { background: #d3f0e0; color: #1f6b42; border-bottom: 3px solid #217346; }
.corner svg { margin-left: 20px; }
tbody th { background: #d2d2d2; color: #1f6b42; border-right: 3px solid #217346; border-bottom: 1px solid #b0b0b0; }
td { height: 42px; padding: 4px 5px 0; background: #fff; border-right: 1px solid #d9d9d9; border-bottom: 1px solid #d0d0d0; white-space: nowrap; }
tbody th { padding-top: 4px; }
.title td { height: 43px; padding-top: 2px; }
.short td { height: 38px; padding-top: 1px; }
.short th { padding-top: 1px; }
td.sel { background: #c6c6c6; border-color: #a6a6a6; }
td.cursor { background: #fff; }
td.room { text-align: center; font-size: 27px; }
td.black { background: #000; }
.bold, td.room.bold { font-weight: 700; font-size: 26px; }
td.room.bold { font-size: 28px; }
td.merged { text-align: center; font-size: 28px; }
td.num { text-align: right; }
.textbox { position: absolute; left: 43.150%; top: 472px; width: 27.540%; height: 432px; padding-top: 94px; display: flex; flex-direction: column; align-items: center; border: 1px solid #d9d9d9; background: #fff; text-align: center; white-space: nowrap; }
.textbox a { color: #000; font-size: 75px; line-height: 92px; text-decoration: underline; text-decoration-thickness: 6px; text-underline-offset: 8px; text-decoration-skip-ink: none; }
.textbox p { margin: 6px 0 0; font-size: 54px; line-height: 76px; }
.vscroll { display: flex; flex-direction: column; width: 33px; margin-top: 21px; padding-left: 2px; }
.vscroll button, .hscroll button { display: grid; place-items: center; flex: none; width: 31px; height: 32px; border: 2px solid #ababab; background: #fff; }
.thumb { background: #fff; border: 2px solid #ababab; }
.track { background: #dadada; }
.vscroll .thumb { flex: 1; }
.vscroll .track { height: 44px; }

.sheetbar { display: flex; align-items: flex-start; height: 45px; border-top: 2px solid #9a9a9a; border-bottom: 2px solid #c6c4c2; }
.nav { margin: 12px 0 0 34px; }
.sheettab { height: 40px; width: 145px; margin: -2px 0 0 60px; border: solid #9a9a9a; border-width: 0 1px; border-bottom: 3px solid #217346; background: #fff; color: #217346; font-weight: 700; font-size: 26px; line-height: 37px; }
.add { margin: 4px 0 0 48px; }
.sheetbar .dots { margin: 11px 22px 0 auto; }
.hscroll { display: flex; width: 38.130%; margin: 4px 32px 0 0; }
.hscroll button { width: 34px; height: 32px; }
.hscroll .thumb { flex: 1; height: 32px; }
.hscroll .track { width: 52px; height: 32px; }

.status { display: flex; align-items: center; justify-content: flex-end; flex: 1; min-height: 42px; padding-right: 8px; background: #f3f2f1; font-size: 20px; }
.status span { margin-left: 29px; }
.views { display: flex; align-self: stretch; margin: 0 13px 0 36px; }
.views button { display: grid; place-items: center; width: 80px; }
.views .on { background: #c6c4c2; }
.status input { width: 197px; margin: 0 10px; height: 22px; appearance: none; background: linear-gradient(#b0aeac, #b0aeac) center / 100% 2px no-repeat; }
.status input::-webkit-slider-thumb { appearance: none; width: 9px; height: 22px; background: #777; }
.status .pct { margin-left: 26px; }

.tooltip { position: absolute; left: 2358px; top: 325px; width: 429px; height: 142px; padding: 11px 21px; background: #fff; border: 2px solid #c0c0c0; box-shadow: 0 2px 5px #0003; color: #666; font-size: 22px; line-height: 32px; white-space: nowrap; z-index: 2; }
.tooltip strong { font-size: 23px; font-weight: 700; color: #5a5a5a; }
.tooltip p { margin: 12px 0 0; }
.notes { position: absolute; left: 0; top: 0; width: 100%; height: auto; z-index: 3; pointer-events: none; }
.notes g text { font: 900 115px Lato, sans-serif; fill: #00f; text-anchor: middle; }
</style>
